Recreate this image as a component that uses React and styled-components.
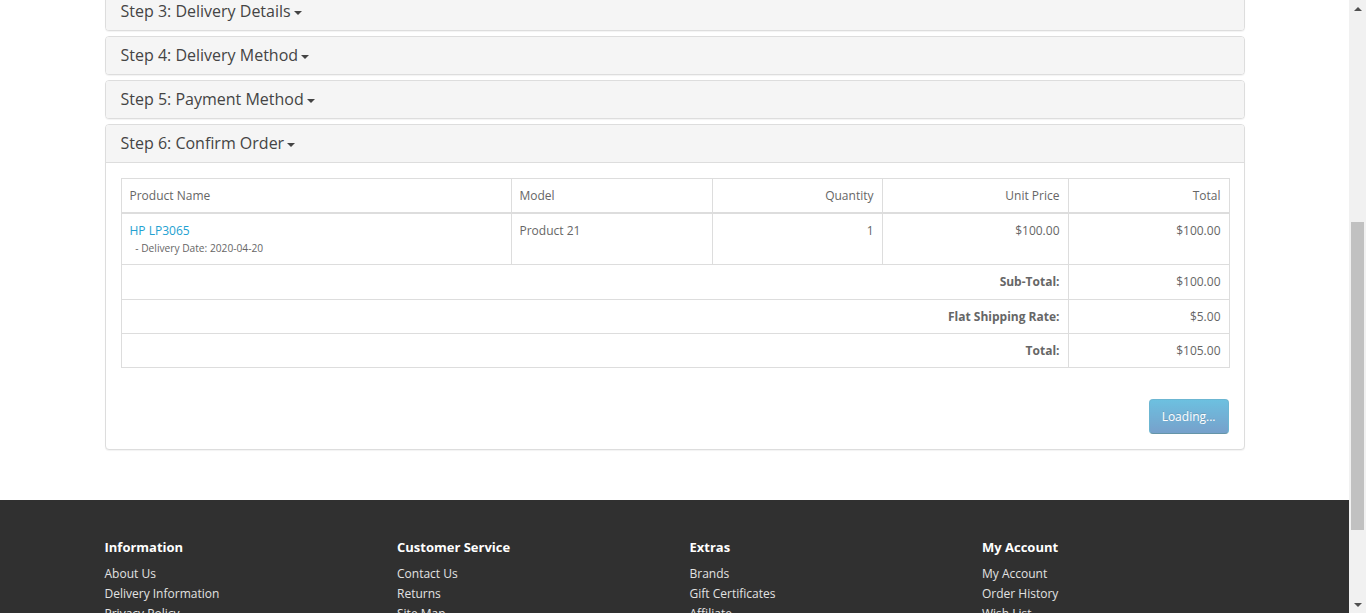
import styled, { createGlobalStyle } from "styled-components"

const GlobalStyle = createGlobalStyle`
    html, body {
        margin: 0;
        padding: 0;
        height: 100%;
        overflow: hidden;
    }
    body {
        font-family: "Open Sans", "Liberation Sans", sans-serif;
        font-size: 12px;
        line-height: 1.42857;
        color: #666;
        background: #fff;
    }
    * { box-sizing: border-box; }
`

const steps = [
    "Step 3: Delivery Details",
    "Step 4: Delivery Method",
    "Step 5: Payment Method",
]

const totals = [
    { label: "Sub-Total:", value: "$100.00" },
    { label: "Flat Shipping Rate:", value: "$5.00" },
    { label: "Total:", value: "$105.00" },
]

const footerCols = [
    { title: "Information", links: ["About Us", "Delivery Information", "Privacy Policy", "Terms & Conditions"] },
    { title: "Customer Service", links: ["Contact Us", "Returns", "Site Map"] },
    { title: "Extras", links: ["Brands", "Gift Certificates", "Affiliate", "Specials"] },
    { title: "My Account", links: ["My Account", "Order History", "Wish List", "Newsletter"] },
]

const App = () => {
    return (
        <Screen>
            <GlobalStyle />
            <Page>
                <Container>
                    <PanelGroup>
                        {steps.map(step => (
                            <Panel key={step}>
                                <PanelHeading>
                                    <PanelTitle>{step} <Caret /></PanelTitle>
                                </PanelHeading>
                            </Panel>
                        ))}
                        <Panel>
                            <PanelHeading open>
                                <PanelTitle>Step 6: Confirm Order <Caret /></PanelTitle>
                            </PanelHeading>
                            <PanelBody>
                                <TableWrap>
                                    <Table>
                                        <colgroup>
                                            <col style={{ width: 390 }} />
                                            <col style={{ width: 201 }} />
                                            <col style={{ width: 170 }} />
                                            <col style={{ width: 186 }} />
                                            <col style={{ width: 161 }} />
                                        </colgroup>
                                        <thead>
                                            <tr>
                                                <HeadCell>Product Name</HeadCell>
                                                <HeadCell>Model</HeadCell>
                                                <HeadCell right>Quantity</HeadCell>
                                                <HeadCell right>Unit Price</HeadCell>
                                                <HeadCell right>Total</HeadCell>
                                            </tr>
                                        </thead>
                                        <tbody>
                                            <tr>
                                                <Cell>
                                                    <ProductLink href="#">HP LP3065</ProductLink>
                                                    <br />
                                                    &nbsp;<Small> - Delivery Date: 2020-04-20</Small>
                                                </Cell>
                                                <Cell>Product 21</Cell>
                                                <Cell right>1</Cell>
                                                <Cell right>$100.00</Cell>
                                                <Cell right>$100.00</Cell>
                                            </tr>
                                        </tbody>
                                        <tfoot>
                                            {totals.map(t => (
                                                <tr key={t.label}>
                                                    <Cell colSpan={4} right><strong>{t.label}</strong></Cell>
                                                    <Cell right>{t.value}</Cell>
                                                </tr>
                                            ))}
                                        </tfoot>
                                    </Table>
                                </TableWrap>
                                <Buttons>
                                    <ConfirmButton disabled>Loading...</ConfirmButton>
                                </Buttons>
                            </PanelBody>
                        </Panel>
                    </PanelGroup>
                </Container>
                <Footer>
                    <Container>
                        <FooterRow>
                            {footerCols.map(col => (
                                <FooterCol key={col.title}>
                                    <FooterTitle>{col.title}</FooterTitle>
                                    <FooterList>
                                        {col.links.map(link => (
                                            <li key={link}><FooterLink href="#">{link}</FooterLink></li>
                                        ))}
                                    </FooterList>
                                </FooterCol>
                            ))}
                        </FooterRow>
                    </Container>
                </Footer>
            </Page>
            <Scrollbar>
                <ScrollArrow />
                <ScrollTrack>
                    <ScrollThumb style={{ marginTop: 205, height: 308 }} />
                </ScrollTrack>
                <ScrollArrow down />
            </Scrollbar>
        </Screen>
    )
}

const Screen = styled.div`
    display: flex;
    width: 100%;
    height: 613px;
    overflow: hidden;
`
const Page = styled.div`
    flex: 1;
    min-width: 0;
    height: 613px;
    overflow: hidden;
`
const Container = styled.div`
    width: 1170px;
    margin: 0 auto;
    padding: 0 15px;
`
const PanelGroup = styled.div`
    margin-top: -8px;
    display: flex;
    flex-direction: column;
    gap: 5px;
`
const Panel = styled.div`
    background: #fff;
    border: 1px solid #ddd;
    border-radius: 4px;
    box-shadow: 0 1px 1px rgba(0, 0, 0, 0.05);
    overflow: hidden;
`
const PanelHeading = styled.div`
    background: #f5f5f5;
    color: #333;
    padding: 10px 15px;
    border-bottom: ${props => props.open ? "1px solid #ddd" : "none"};
`
const PanelTitle = styled.h4`
    margin: 0;
    font-size: 16px;
    font-weight: normal;
    line-height: 17px;
    color: #444;
`
const Caret = styled.span`
    display: inline-block;
    width: 0;
    height: 0;
    margin-left: -1px;
    vertical-align: middle;
    border-top: 4px solid #444;
    border-left: 4px solid transparent;
    border-right: 4px solid transparent;
`
const PanelBody = styled.div`
    padding: 15px;
`
const TableWrap = styled.div`
    padding-bottom: 20px;
`
const Table = styled.table`
    width: 100%;
    table-layout: fixed;
    border-collapse: collapse;
    border: 1px solid #ddd;
`
const HeadCell = styled.td`
    padding: 8px;
    border: 1px solid #ddd;
    border-bottom-width: 2px;
    text-align: ${props => props.right ? "right" : "left"};
    vertical-align: bottom;
    line-height: 1.42857;
`
const Cell = styled.td`
    padding: 8px;
    border: 1px solid #ddd;
    text-align: ${props => props.right ? "right" : "left"};
    vertical-align: top;
    line-height: 1.42857;

    strong {
        font-weight: bold;
    }
`
const ProductLink = styled.a`
    color: #23a1d1;
    text-decoration: none;
`
const Small = styled.small`
    font-size: 85%;
`
const Buttons = styled.div`
    display: flex;
    justify-content: flex-end;
    margin-top: 11px;
`
const ConfirmButton = styled.button`
    font-family: "Open Sans", "Liberation Sans", sans-serif;
    font-size: 12px;
    line-height: 1.42857;
    padding: 8px 12px;
    color: #fff;
    border: 1px solid #1f90bb;
    border-bottom-color: #145e7a;
    border-radius: 4px;
    background-image: linear-gradient(to bottom, #1f9fd0, #2f6fb0);
    text-shadow: 0 -1px 0 rgba(0, 0, 0, 0.25);
    opacity: 0.65;
    cursor: not-allowed;
`
const Footer = styled.footer`
    margin-top: 50px;
    padding-top: 30px;
    background: #303030;
    color: #e2e2e2;
    min-height: 200px;
`
const FooterRow = styled.div`
    display: grid;
    grid-template-columns: repeat(4, 1fr);
    margin: 0 -15px;
`
const FooterCol = styled.div`
    padding: 0 15px;
`
const FooterTitle = styled.h5`
    margin: 10px 0;
    font-size: 13px;
    font-weight: bold;
    line-height: 1.1;
    color: #fff;
`
const FooterList = styled.ul`
    list-style: none;
    margin: 0;
    padding: 0;
    line-height: 20px;
`
const FooterLink = styled.a`
    color: #e2e2e2;
    text-decoration: none;
`
const Scrollbar = styled.div`
    width: 17px;
    height: 613px;
    background: #f1f1f1;
    display: flex;
    flex-direction: column;
`
const ScrollArrow = styled.div`
    height: 17px;
    display: flex;
    align-items: center;
    justify-content: center;

    &::before {
        content: "";
        width: 0;
        height: 0;
        border-left: 4px solid transparent;
        border-right: 4px solid transparent;
        ${props => props.down
            ? "border-top: 4px solid #505050;"
            : "border-bottom: 4px solid #505050;"}
    }
`
const ScrollTrack = styled.div`
    flex: 1;
    display: flex;
    flex-direction: column;
    align-items: center;
`
const ScrollThumb = styled.div`
    width: 13px;
    background: #c1c1c1;
`

export default App
